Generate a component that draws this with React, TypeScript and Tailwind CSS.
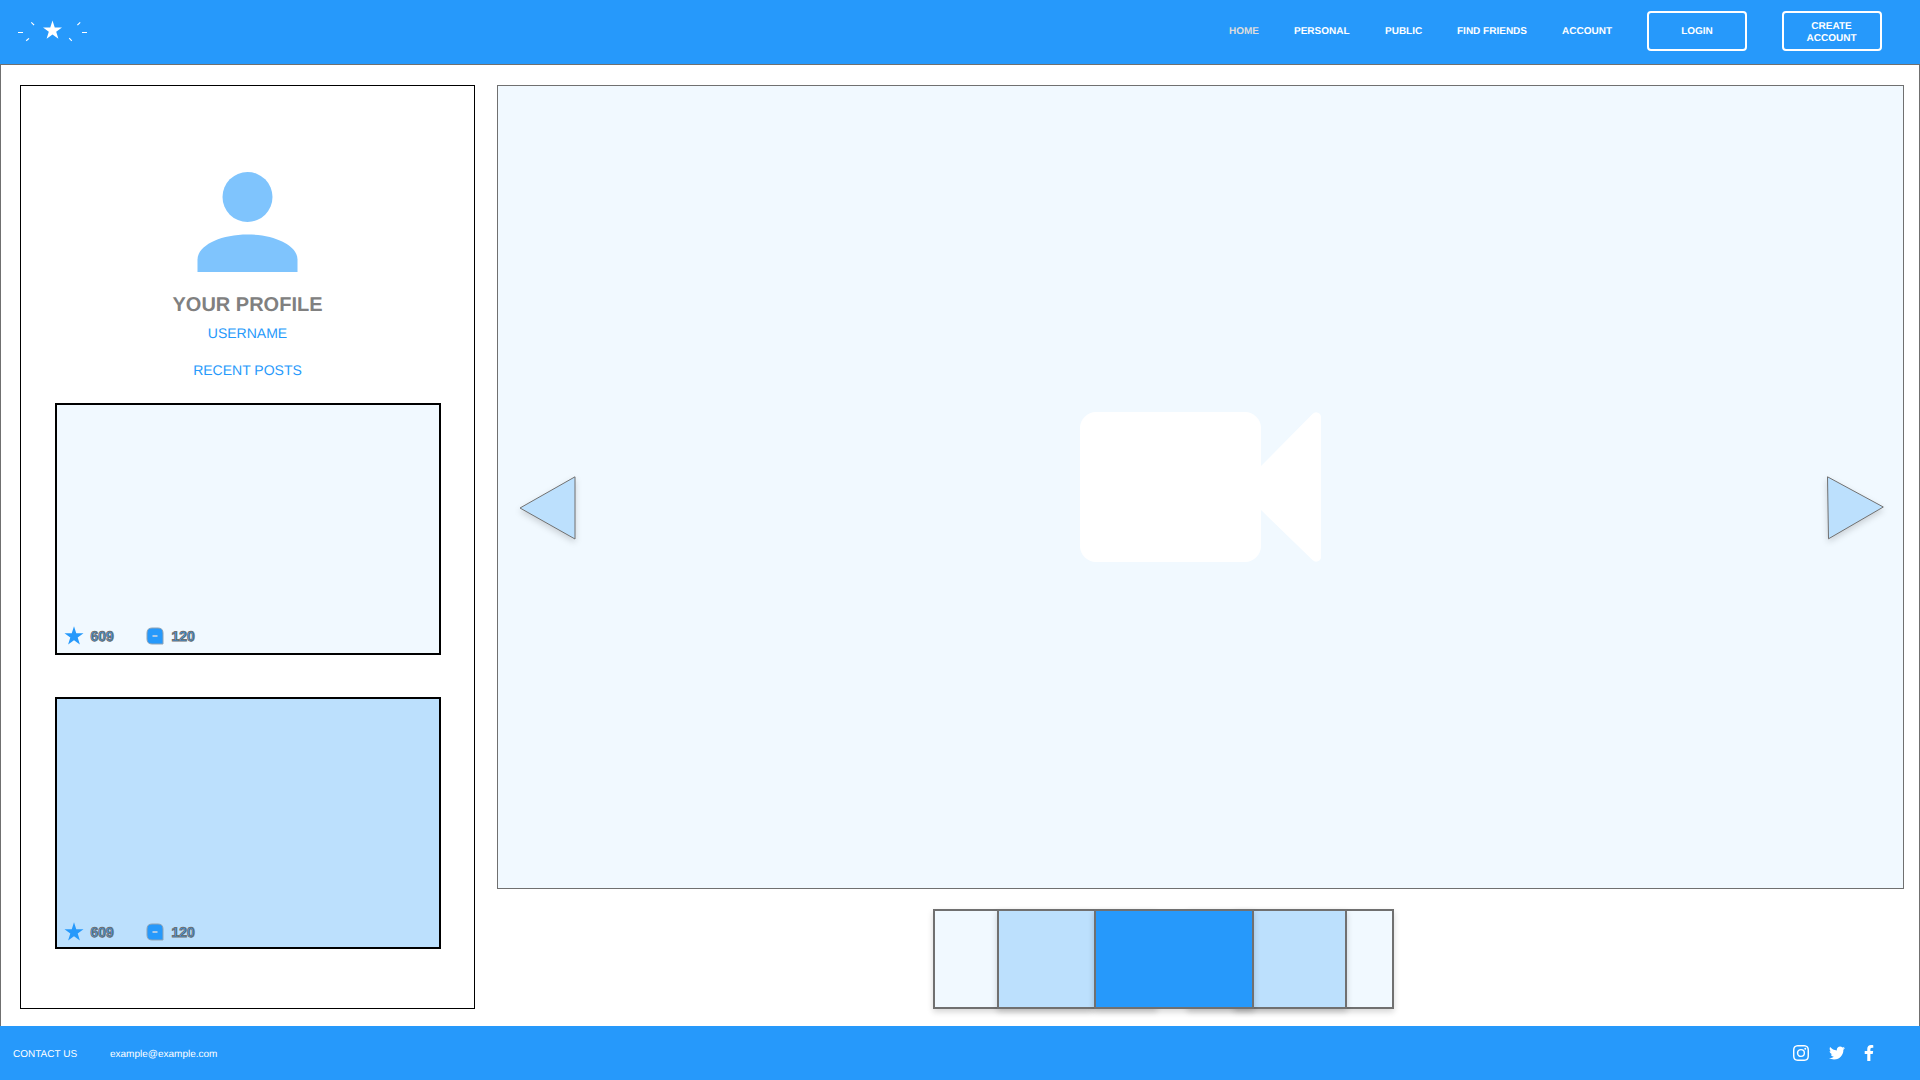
import { BsInstagram } from "react-icons/bs";
import { FaFacebookF, FaTwitter } from "react-icons/fa";

const STAR = "M9.5 0L11.75 6.9H19L13.2 11.3L15.4 18.3L9.5 14L3.6 18.3L5.8 11.3L0 6.9H7.25Z";

function Logo() {
  return (
    <svg className="ml-[17px] mt-[19px] h-6 w-[72px] shrink-0" viewBox="17 19 72 24" fill="none">
      <path d={STAR} transform="translate(43 20.5)" fill="#fff" />
      <path
        d="M18 32.5h5M31.3 22.3l2.8 2.8M26.2 40.8l2.8-2.4M82 32.5h5M80.2 22.3l-2.8 2.8M69.2 38.2l2.6 2.6"
        stroke="#fff"
        strokeWidth="1.2"
      />
    </svg>
  );
}

function Header() {
  return (
    <header className="flex h-16 shrink-0 bg-[#2699fb] text-[10px] font-bold leading-3 text-white">
      <Logo />
      <nav className="ml-auto flex pt-[26px] leading-[12px]">
        <a className="w-[65px] text-[#dcdcdc]">HOME</a>
        <a className="w-[91px]">PERSONAL</a>
        <a className="w-[72px]">PUBLIC</a>
        <a className="w-[105px]">FIND FRIENDS</a>
        <a className="w-[85px]">ACCOUNT</a>
      </nav>
      <button className="mt-[11px] flex h-10 w-[100px] items-center justify-center rounded border-2 border-white pt-0.5 [text-rendering:geometricPrecision]">
        LOGIN
      </button>
      <button className="ml-[35px] mr-[38px] mt-[11px] flex h-10 w-[100px] items-center justify-center rounded border-2 border-white pr-px pt-[3px] [text-rendering:geometricPrecision]">
        <span className="w-[60px]">CREATE ACCOUNT</span>
      </button>
    </header>
  );
}

function Stats() {
  return (
    <div className="flex h-[19px] items-center text-[14px] font-bold leading-4 text-[#2699fb]">
      <svg className="h-[19px] w-[19px] overflow-visible" viewBox="0 0 19 19">
        <path d={STAR} fill="#2699fb" transform="translate(0.5 0.3)" />
      </svg>
      <span className="ml-2 w-[55px] [-webkit-text-stroke:1px_#707070]">609</span>
      <svg className="h-[18px] w-[18px]" viewBox="0 0 18 18" fill="#2699fb">
        <path d="M6 1h6q5 0 5 5v11H6q-5 0-5-5V6q0-5 5-5z" stroke="#8fa3b5" strokeLinejoin="round" />
        <rect x="6.5" y="8" width="5" height="2" fill="#a9c9e8" />
      </svg>
      <span className="ml-2 [-webkit-text-stroke:1px_#707070]">120</span>
    </div>
  );
}

function Sidebar() {
  return (
    <aside className="flex h-[924px] w-[455px] shrink-0 flex-col items-center border border-black">
      <svg className="-ml-px mt-[61px] h-[150px] w-[150px]" viewBox="0 0 24 24" fill="#7fc4fd">
        <g transform="translate(0.08 0)">
          <circle cx="12" cy="8" r="4" />
          <path d="M12 14c-4.42 0-8 1.79-8 4v2h16v-2c0-2.21-3.58-4-8-4z" />
        </g>
      </svg>
      <h1 className="-mt-1 text-[20px] font-bold leading-6 text-[#808080]">YOUR PROFILE</h1>
      <p className="mt-2 text-[14px] leading-4 text-[#2699fb]">USERNAME</p>
      <p className="mt-[21px] text-[14px] leading-4 text-[#2699fb]">RECENT POSTS</p>
      <div className="mt-[25px] flex h-[252px] w-[386px] flex-col justify-end border-2 border-black bg-[#f1f9ff] pb-2 pl-[7px]">
        <Stats />
      </div>
      <div className="mt-[42px] flex h-[252px] w-[386px] flex-col justify-end border-2 border-black bg-[#bce0fd] pb-1.5 pl-[7px]">
        <Stats />
      </div>
    </aside>
  );
}

function Viewer() {
  return (
    <section className="flex h-[804px] w-[1407px] items-start border border-[#707070] bg-[#f1f9ff]">
      <svg
        className="ml-5 mt-[389px] h-[66px] w-[60px] overflow-visible drop-shadow-[0_3px_3px_rgba(0,0,0,0.16)]"
        viewBox="519 475 60 66"
      >
        <path d="M521 508L576 476.800V539z" fill="#bce0fd" stroke="#707070" />
      </svg>
      <svg className="ml-[502px] mt-[326px] h-[150px] w-[242px]" viewBox="0 0 242 150" fill="#fff">
        <rect width="181" height="150" rx="16" />
        <path d="M180 55L232.500 2Q235 -.5 238 .7Q241 2 241 5V145Q241 148 238 149.300Q235 150.500 232.500 148L180 97z" />
      </svg>
      <svg
        className="ml-[504px] mt-[389px] h-[66px] w-[60px] overflow-visible drop-shadow-[0_3px_3px_rgba(0,0,0,0.16)]"
        viewBox="1826 475 60 66"
      >
        <path d="M1827.500 476.800L1883.300 507L1828.500 538.800z" fill="#bce0fd" stroke="#707070" />
      </svg>
    </section>
  );
}

const tile = "relative h-[100px] w-40 shrink-0 border-2 border-[#707070] shadow-[0_3px_6px_rgba(0,0,0,0.16)] ";

function Carousel() {
  return (
    <div className="ml-[436px] mt-5 flex">
      <div className={tile + "z-0 bg-[#f1f9ff]"} />
      <div className={tile + "z-10 -ml-24 bg-[#bce0fd]"} />
      <div className={tile + "z-20 -ml-[63px] bg-[#2699fb]"} />
      <div className={tile + "z-10 -ml-[67px] bg-[#bce0fd]"} />
      <div className={tile + "z-0 -ml-[113px] bg-[#f1f9ff]"} />
    </div>
  );
}

function Footer() {
  return (
    <footer className="flex h-[54px] shrink-0 items-center bg-[#2699fb] text-[10px] leading-3 text-white">
      <span className="ml-[13px] w-[97px] pt-1">CONTACT US</span>
      <span className="pt-1">example@example.com</span>
      <div className="ml-auto mr-[43px] flex items-center">
        <BsInstagram className="h-4 w-4" />
        <FaTwitter className="ml-5 h-4 w-4" />
        <FaFacebookF className="ml-4 h-4 w-4" />
      </div>
    </footer>
  );
}

export default function App() {
  return (
    <div className="flex h-[1080px] w-[1920px] flex-col overflow-hidden bg-white font-['Liberation_Sans',Arial,sans-serif] [text-rendering:geometricPrecision]">
      <Header />
      <main className="flex h-[962px] border-x border-t border-[#707070] pl-[19px] pt-5">
        <Sidebar />
        <div className="ml-[22px] flex flex-col">
          <Viewer />
          <Carousel />
        </div>
      </main>
      <Footer />
    </div>
  );
}
